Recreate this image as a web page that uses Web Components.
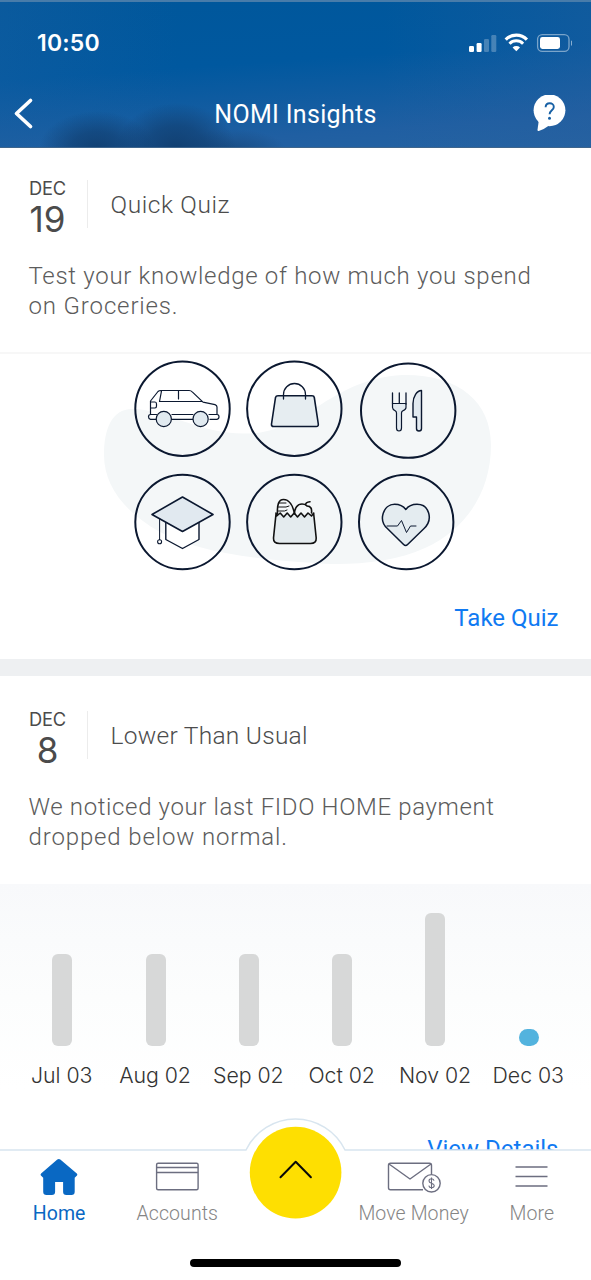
<!DOCTYPE html>
<html lang="en">
<head>
<meta charset="utf-8">
<meta name="viewport" content="width=device-width">
<title>NOMI Insights</title>
<style>
html,body{margin:0;height:100%;overflow:hidden;background:#fff}
body{font-family:Inter,"Liberation Sans",sans-serif}
</style>
</head>
<body>
<nomi-app></nomi-app>
<script>
const define = (name, html, setup) => {
  const template = document.createElement('template');
  template.innerHTML = html;
  customElements.define(name, class extends HTMLElement {
    constructor() {
      super();
      this.attachShadow({ mode: 'open' }).append(template.content.cloneNode(true));
    }
    connectedCallback() { if (setup) setup(this, this.shadowRoot); }
  });
};

define('status-bar', `
<style>
:host{display:flex;height:80px;box-sizing:border-box;padding:0 19px 0 37px;align-items:flex-start;justify-content:space-between;color:#fff}
time{font:600 23px/28px Inter,sans-serif;letter-spacing:.2px;margin-top:27px}
svg{display:block;margin-top:28px}
</style>
<time>10:50</time>
<svg width="104" height="26" viewBox="468 30 104 26" fill="#fff">
<rect x="469" y="46" width="5" height="6" rx="1.2"/><rect x="476.6" y="43" width="5" height="9" rx="1.2"/>
<g opacity=".25"><rect x="484" y="39" width="5" height="13" rx="1.2"/><rect x="491.3" y="35" width="5" height="17" rx="1.2"/></g>
<path d="M505.700 39.600a14.600 14.600 0 0 1 21.200 0" fill="none" stroke="#fff" stroke-width="3.200"/>
<path d="M509.500 43.700a9.500 9.500 0 0 1 13.600 0" fill="none" stroke="#fff" stroke-width="3"/>
<path d="M512.600 47.400a5.400 5.400 0 0 1 7.400 0L516.300 51.300z"/>
<rect x="537.600" y="34.600" width="31.400" height="16.800" rx="4.700" fill="none" stroke="#fff" stroke-opacity=".45" stroke-width="1.300"/>
<rect x="540" y="37" width="20" height="12" rx="2.400"/><path d="M571 40.500c2.600.7 2.600 4.600 0 5.300z" opacity=".5"/>
</svg>`);

define('nav-header', `
<style>
:host{display:block;height:148px;box-sizing:border-box;border-top:2px solid #487caa;border-bottom:1px solid #3e658c;overflow:hidden;
background:radial-gradient(ellipse 58px 38px at 97px 147px,#0f3c6cdd 0,#0f3c6c99 45%,transparent 100%),radial-gradient(ellipse 60px 46px at 176px 147px,#0f3c6ce8 0,#0f3c6c99 50%,transparent 100%),radial-gradient(ellipse 55px 22px at 232px 149px,#164577bb,transparent),linear-gradient(90deg,#1f60a255 0,transparent 30%,transparent 65%,#285f9e66 100%),linear-gradient(176deg,#00579b 0,#00589f 42%,#205fa2 83%,#2563a2 100%)}
nav{display:grid;grid-template-columns:60px 1fr 60px;height:66px;align-items:center}
h1{margin:0;text-align:center;color:#fff;font:400 25px/30px Roboto,sans-serif;letter-spacing:.32px}
svg{display:block}
.help{justify-self:end;margin-right:20px}
</style>
<status-bar></status-bar>
<nav>
<svg width="40" height="40" viewBox="0 95 40 40" fill="none" stroke="#fff" stroke-width="3.700" stroke-linecap="round" stroke-linejoin="round"><path d="M30.500 100.500 16.500 113.500 30.500 126.500"/></svg>
<h1><slot></slot></h1>
<svg class="help" width="40" height="40" viewBox="531 95 40 40"><circle cx="549.500" cy="110.300" r="15.900" fill="#fff"/><path fill="#fff" d="M539 119l-1.500 10.800q-.2 1.500 1.300 1.200 5.500-1.800 11-6z"/><path d="M545.600 107.300c.2-5.400 8.200-5.300 8.200-.4 0 3.400-4.200 3.400-4.200 7.400" fill="none" stroke="#1760a5" stroke-width="1.900"/><circle cx="549.500" cy="118.300" r="1.500" fill="#1760a5"/></svg>
</nav>`);

define('date-badge', `
<style>
:host{display:flex;flex-direction:column;align-items:center;width:39px;color:#4b4b4b}
span{font:400 18.300px/22px Inter,sans-serif;letter-spacing:-.2px;margin-top:-1px}
strong{font:400 35px/38px Inter,sans-serif;letter-spacing:0;margin-top:1px}
</style><span></span><strong></strong>`, (el, root) => {
  root.querySelector('span').textContent = el.getAttribute('month');
  root.querySelector('strong').textContent = el.getAttribute('day');
});

define('insight-card', `
<style>
:host{display:block;background:#fff;color:#5c5c5c}
header{display:flex;padding:var(--card-top,30px) 28px 0;height:58px}
h2{margin:2px 0 0 20px;border-left:1px solid #ececec;padding-left:22.500px;height:48px;color:#4c4c4c;font:300 24.500px/50px Roboto,sans-serif;letter-spacing:var(--heading-spacing,.6px)}
p{margin:0;padding:25px 28px 0 28.500px;height:91px;font:300 24px/30px Roboto,sans-serif;letter-spacing:.86px}
</style>
<header><date-badge month="DEC"></date-badge><h2></h2></header>
<p><slot name="message"></slot></p>
<slot></slot>`, (el, root) => {
  root.querySelector('date-badge').shadowRoot.querySelector('strong').textContent = el.getAttribute('day');
  root.querySelector('date-badge').setAttribute('day', el.getAttribute('day'));
  root.querySelector('h2').textContent = el.getAttribute('heading');
});

define('quiz-art', `
<style>:host{display:block;border-top:2px solid #f7f7f7;height:228px}svg{display:block}</style>
<svg width="591" height="228" viewBox="0 354 591 228" fill="none" stroke="#0b1830" stroke-width="1.300" stroke-linejoin="round" stroke-linecap="round">
<path fill="#f4f7f8" stroke="none" d="M104 455c0-26 8-46 28-46 36 0 72 29 124 24 51-5 77-54 146-58 57-1 89 27 89 70 0 48-26 85-66 103-32 15-80 18-110 15-69-4-122-13-155-31-36-20-56-47-56-77z"/>
<g stroke-width="2">
<circle cx="182.500" cy="408.700" r="47.200"/><circle cx="294.300" cy="408.700" r="47.200"/><circle cx="408.200" cy="410.600" r="47.200"/><circle cx="182.500" cy="522" r="47.200"/><circle cx="294.300" cy="522" r="47.200"/><circle cx="406.200" cy="522" r="47.200"/>
</g>
<g stroke-width="1.200">
<path fill="#fff" stroke="none" d="M150.500 401l8-10h34l13 12 11 2.500v13h-65z"/>
<path d="M150.500 414.500v-13.500l7.500-9.500q1-1 3-1h28q2 0 3.500 1.600l10.500 10 12 2.500q2 .8 2 2.500v7.400M161.500 391l-2 10.500h43M178.500 391v8M151 402h4q1.500 0 1.500 2v2q0 2-1.500 2h-4M172 414.500h21M209 414.500h8q2 0 2 2.300t-2 2.500h-7M171.500 419.300h22M156 419.300h-5.500q-2-.3-2-2.500t2-2.300h6"/>
<circle cx="163.800" cy="419" r="7.600" fill="#e1eaf0"/><circle cx="200.600" cy="419" r="7.600" fill="#e1eaf0"/>
</g>
<path fill="#e6edf1" stroke-width="1.600" d="M278 395.700h34q2 0 2.300 1.800l4 26.500q.3 2.500-2 2.500h-42.600q-2.500 0-2.200-2.500l4-26.500q.5-1.800 2.500-1.800z"/>
<path d="M283.500 399v-4.500a11 11 0 0 1 22 0v4.500"/>
<path fill="#e2eaf0" stroke-width="1.200" d="M392.500 403.500h13.500v4q0 2-3.500 3.500-1 .7-1 2v15q0 3-2.500 3t-2.500-3v-15q0-1.300-1-2-3-1.500-3-3.500z"/><path d="M392.500 393v11M399.300 393v10M406 393v11"/>
<path fill="#e2eaf0" stroke-width="1.400" d="M421.500 390.500c-4.500 0-8.500 6-8.500 13v13.500h3.500v11.500q0 2.500 2.500 2.500t2.500-2.500z"/>
<path fill="#fff" stroke-width="1.400" d="M165.800 521.500v18l16.700 9 16.500-9v-18"/><path fill="#e1e9f0" stroke-width="1.600" d="M152 514.500l30.500-17.500 30.500 17.500-30.500 17z"/><path stroke-width="1" d="M159.600 519v20.700"/><circle cx="159.600" cy="541.800" r="2" stroke-width="1.100"/>
<g stroke="#111" stroke-width="1.600"><path fill="#e4ebee" d="M276 513v1l-2.500 24q-.3 5.500 6 5.500h31q6 0 5.700-5.500l-2.500-24v-1l-2.200 3-3.500-3-3.500 4-3.500-4-3.500 4-3.300-4-3.500 4-3.500-4-3.500 4-3.500-4-3.500 3z"/><path d="M277.500 514c-.5-9 1-14.500 6-14.500 5.500 0 9.500 6 11 14.500M294.500 514c0-6 3-10 7.500-10 3.500 0 4 1 5 2 4 0 5 3 4.500 7M305.500 505c0-2.500 2-3 4.500-3.200"/><path stroke-width="1" d="M279 503h7M278 507h8l3-1M278.500 511h6l2.500-1"/></g>
<path fill="#e4ecf0" stroke-width="1.500" d="M405.600 545.500q-1 0-2-1l-16-15.700c-10-9-4-24.500 7-24.500 5 0 8.500 1.500 11.200 5.200 2.700-3.700 6.500-5.200 11.200-5.200 12 0 16.800 15 6.800 24.500l-16.200 15.700q-1 1-2 1z"/><path stroke-width="1" d="M387 526h10.500l4-5.500 5 12 4-6.500h5.500"/>
</svg>`);

define('link-row', `
<style>:host{display:flex;justify-content:flex-end;padding-right:32.500px}a{color:#107af2;font:400 24px/30px Roboto,sans-serif}</style>
<a><slot></slot></a>`);

define('bar-column', `
<style>
:host{display:flex;flex-direction:column;align-items:center;justify-content:flex-end;color:#333}
i{display:block;width:20px;border-radius:6px;background:#d7d8d8}
:host([current]) i{background:#53b3de;border-radius:9px}
span{font:350 21.300px/26px Inter,sans-serif;letter-spacing:-.05px;margin:16px 1px 0 0;white-space:nowrap}
</style><i></i><span><slot></slot></span>`, (el, root) => {
  root.querySelector('i').style.height = el.getAttribute('value') + 'px';
});

define('payment-chart', `
<style>:host{display:grid;grid-template-columns:repeat(6,93.300px);justify-content:center;margin-top:1px;height:205px;box-sizing:border-box;background:linear-gradient(#f8f9fb,#fcfdfd 55%,#fff)}bar-column{height:204px}</style>
<bar-column value="92">Jul 03</bar-column><bar-column value="92">Aug 02</bar-column><bar-column value="92">Sep 02</bar-column><bar-column value="92">Oct 02</bar-column><bar-column value="133">Nov 02</bar-column><bar-column value="17" current>Dec 03</bar-column>`);

define('tab-item', `
<style>
:host{display:flex;flex-direction:column;align-items:center;color:#858585}
:host([active]) {color:#0968c3}
span{font:300 19.500px/24px Roboto,sans-serif;letter-spacing:.1px;white-space:nowrap;margin-top:2px}
:host([active]) span{font-weight:400;letter-spacing:0}
</style><slot name="icon"></slot><span><slot></slot></span>`);

define('tab-bar', `
<style>
:host{display:block;position:absolute;left:0;right:0;bottom:0;height:163px}
.edge{position:absolute;inset:0;display:block}
nav{position:relative;display:grid;grid-template-columns:repeat(5,118.200px);padding-top:39px}
svg{display:block}
.home{position:absolute;left:190px;bottom:13px;width:211px;height:8px;border-radius:4px;background:#000}
</style>
<svg class="edge" width="591" height="163" viewBox="0 1117 591 163"><path d="M-2 1150H246a55 55 0 0 1 99 0H593v132H-2z" fill="#fff" stroke="#d8e5ef" stroke-width="1.500"/><circle cx="295.600" cy="1172.600" r="45.800" fill="#fedf01"/><path d="M280.500 1177.300l15.200-15.500 15.200 15.500" fill="none" stroke="#080808" stroke-width="2" stroke-linecap="round" stroke-linejoin="round"/></svg>
<nav>
<tab-item active><svg slot="icon" width="60" height="44" viewBox="29 1156 60 44"><path fill="#0968c3" d="M57.300 1159.600q1.500-1.200 3 0l16.500 14q1 1 .2 2l-2.300 2.100v14q0 3.300-3.300 3.300h-5q-3.300 0-3.300-3.300v-9.700h-8v9.700q0 3.300-3.300 3.300h-5.300q-3.300 0-3.300-3.300v-14l-2.300-2.100q-.8-1 .2-2z"/></svg>Home</tab-item>
<tab-item><svg slot="icon" width="60" height="44" viewBox="147 1156 60 44" fill="none" stroke="#6c6e80" stroke-width="1.400"><rect x="156.600" y="1163.300" width="41.500" height="26.500" rx="1.500"/><path d="M156.600 1167.500h41.500M156.600 1172.500h41.500"/></svg>Accounts</tab-item>
<span></span>
<tab-item><svg slot="icon" width="60" height="44" viewBox="384 1156 60 44" fill="none" stroke="#6c6e80" stroke-width="1.400" stroke-linejoin="round"><path d="M423 1189.800h-32.500q-2 0-2-2v-22.500q0-2 2-2h39q2 0 2 2v8.700M389 1164l21 15 21-15"/><circle cx="431.500" cy="1183.300" r="8.700"/><path stroke-width="1.100" d="M434 1180.800c-.4-3-5-2.500-5 .1 0 3 5.200 1.800 5.200 4.700 0 2.700-4.800 3.100-5.400 0M431.500 1177.500v11.500"/></svg>Move Money</tab-item>
<tab-item><svg slot="icon" width="60" height="44" viewBox="502.500 1156 60 44" stroke="#6c6e80" stroke-width="1.500"><path d="M516 1166.900h32M516 1176.500h32M516 1186h32"/></svg>More</tab-item>
</nav><div class="home"></div>`);

define('nomi-app', `
<style>
:host{display:block;position:relative;width:591px;height:1280px;overflow:hidden;background:#fff}
.gap{height:17px;background:#eef0f2}
insight-card{height:511px}
.lower{--card-top:33px;--heading-spacing:.28px}
[slot=message] span{display:block;white-space:nowrap}
.wide{letter-spacing:.7px}
.lower .wide{letter-spacing:.63px}
.quiz{margin-top:21px}
.details{margin-top:45px}
</style>
<nav-header>NOMI Insights</nav-header>
<insight-card day="19" heading="Quick Quiz"><div slot="message"><span class="wide">Test your knowledge of how much you spend</span><span>on Groceries.</span></div><quiz-art></quiz-art><link-row class="quiz">Take Quiz</link-row></insight-card>
<div class="gap"></div>
<insight-card class="lower" day="8" heading="Lower Than Usual"><div slot="message"><span class="wide">We noticed your last FIDO HOME payment</span><span>dropped below normal.</span></div><payment-chart></payment-chart><link-row class="details">View Details</link-row></insight-card>
<tab-bar></tab-bar>`);
</script>
</body>
</html>
